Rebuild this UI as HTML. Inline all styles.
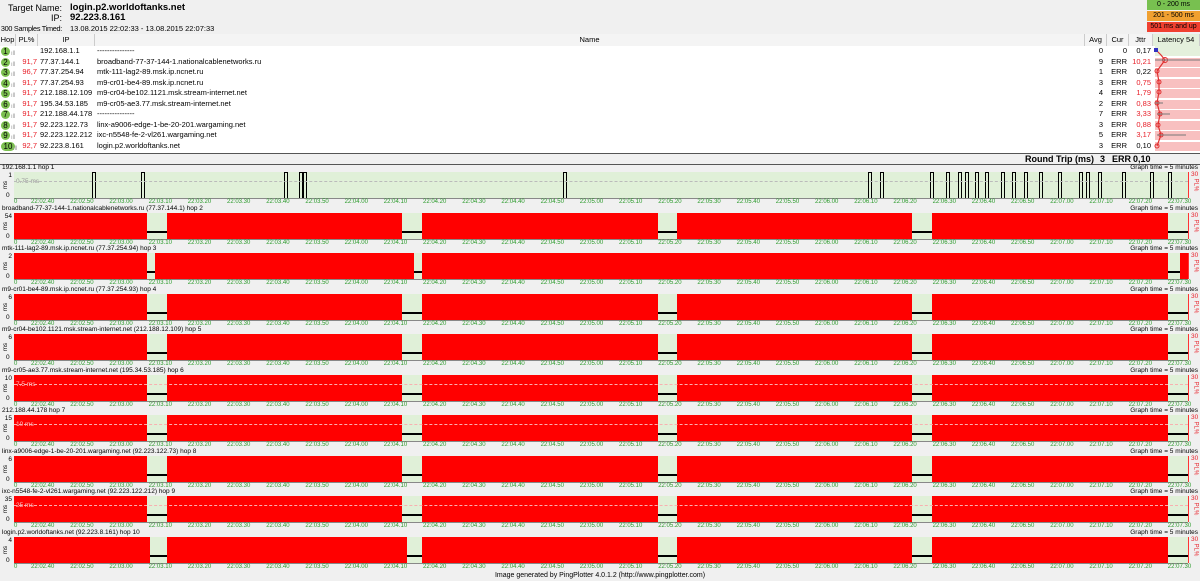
<!DOCTYPE html>
<html><head><meta charset="utf-8"><style>
*{margin:0;padding:0;box-sizing:border-box}
body{width:1200px;height:581px;background:#f0f0f0;font-family:"Liberation Sans",sans-serif;position:relative;overflow:hidden;color:#000}
.a{position:absolute;white-space:nowrap}
.col{position:absolute;top:34px;height:12px;border-right:1px solid #ccc;font-size:7.5px;line-height:12px;text-align:center;background:#f4f4f4}
.row{position:absolute;left:0;width:1153px;height:10.5px;font-size:7.5px;line-height:10.5px}
.red{color:#e8202a}
.t{font-size:6px;line-height:6px;color:#2a9a2a;position:absolute}
.ttl{font-size:6.5px;line-height:7px;position:absolute;left:2px}
.rl{position:absolute;left:0;width:62px;text-align:right;white-space:nowrap}
</style></head><body>
<div class="rl" style="top:3px;font-size:9px">Target Name:</div>
<div class="a" style="left:70px;top:2px;font-size:9.5px;font-weight:bold">login.p2.worldoftanks.net</div>
<div class="rl" style="top:13px;font-size:9px">IP:</div>
<div class="a" style="left:70px;top:12px;font-size:9.5px;font-weight:bold">92.223.8.161</div>
<div class="rl" style="top:24px;font-size:7.3px;letter-spacing:-0.3px">300 Samples Timed:</div>
<div class="a" style="left:70px;top:24px;font-size:7.5px">13.08.2015 22:02:33 - 13.08.2015 22:07:33</div>
<div class="a" style="left:1147px;top:0;width:53px;height:10px;background:#78c050;font-size:7px;text-align:center;line-height:10px">0 - 200 ms</div>
<div class="a" style="left:1147px;top:11px;width:53px;height:10px;background:#f0a030;font-size:7px;text-align:center;line-height:10px">201 - 500 ms</div>
<div class="a" style="left:1147px;top:22px;width:53px;height:10px;background:#f04030;font-size:7px;text-align:center;line-height:10px">501 ms and up</div>
<div class="a" style="left:0;top:46px;width:1200px;height:107px;background:#fff"></div>
<div class="col" style="left:0;width:16px">Hop</div>
<div class="col" style="left:16px;width:22px">PL%</div>
<div class="col" style="left:38px;width:57px">IP</div>
<div class="col" style="left:95px;width:990px">Name</div>
<div class="col" style="left:1085px;width:22px">Avg</div>
<div class="col" style="left:1107px;width:22px">Cur</div>
<div class="col" style="left:1129px;width:24px">Jttr</div>
<div class="col" style="left:1153px;width:47px;background:#e4f0dc">Latency 54</div>
<div class="a" style="left:1155px;top:46px;width:45px;height:10px;background:#e4f0dc"></div>
<div id="lat"></div>
<div id="rows"></div>
<svg class="a" style="left:1153px;top:46px" width="47" height="107">
<polyline points="3,4 8,9 12,14 4,25 6,36 6,46 4,57 7,68 5,79 8,89 4,100" fill="none" stroke="#e03030" stroke-width="1.2"/>
<g fill="none" stroke="#e03030" stroke-width="1"><circle cx="12" cy="14" r="2.5"/><circle cx="4" cy="25" r="2"/><circle cx="6" cy="36" r="2"/><circle cx="6" cy="46" r="2"/><circle cx="4" cy="57" r="2"/><circle cx="7" cy="68" r="2"/><circle cx="5" cy="79" r="2"/><circle cx="8" cy="89" r="2"/><circle cx="4" cy="100" r="2"/></g>
<rect x="1" y="2" width="4" height="4" fill="#3030c0"/>
<g stroke="#777"><line x1="2" y1="14" x2="47" y2="14"/><line x1="2" y1="57" x2="10" y2="57"/><line x1="4" y1="68" x2="17" y2="68"/><line x1="4" y1="89" x2="33" y2="89"/></g>
</svg>
<div class="a" style="left:0;top:153px;width:1200px;height:1px;background:#555"></div>
<div class="a" style="left:1025px;top:154px;font-size:9px;font-weight:bold">Round Trip (ms)</div>
<div class="a" style="left:1100px;top:154px;font-size:9px;font-weight:bold">3</div>
<div class="a" style="left:1112px;top:154px;font-size:9px;font-weight:bold">ERR</div>
<div class="a" style="left:1133px;top:154px;font-size:9px;font-weight:bold">0,10</div>
<div class="a" style="left:0;top:164px;width:1200px;height:1px;background:#555"></div>
<div id="g"></div>
<div class="a" style="left:0;top:572px;width:1200px;text-align:center;font-size:7px">Image generated by PingPlotter 4.0.1.2 (http://www.pingplotter.com)</div>
<script>
var rows=[["","192.168.1.1","---------------","0","0","0,17",0],["91,7","77.37.144.1","broadband-77-37-144-1.nationalcablenetworks.ru","9","ERR","10,21",1],["96,7","77.37.254.94","mtk-111-lag2-89.msk.ip.ncnet.ru","1","ERR","0,22",0],["91,7","77.37.254.93","m9-cr01-be4-89.msk.ip.ncnet.ru","3","ERR","0,75",1],["91,7","212.188.12.109","m9-cr04-be102.1121.msk.stream-internet.net","4","ERR","1,79",1],["91,7","195.34.53.185","m9-cr05-ae3.77.msk.stream-internet.net","2","ERR","0,83",1],["91,7","212.188.44.178","---------------","7","ERR","3,33",1],["91,7","92.223.122.73","linx-a9006-edge-1-be-20-201.wargaming.net","3","ERR","0,88",1],["91,7","92.223.122.212","ixc-n5548-fe-2-vl261.wargaming.net","5","ERR","3,17",1],["92,7","92.223.8.161","login.p2.worldoftanks.net","3","ERR","0,10",0]];
var h="",L="";
rows.forEach(function(r,i){var y=46+i*10.5;
L+='<div class="a" style="left:1155px;top:'+(y+1)+'px;width:45px;height:9px;background:'+(i==0?'#e4f0dc':'#f8c0c0')+'"></div>';
h+='<div class="row" style="top:'+y+'px"><span class="a" style="left:1px;top:1px;width:'+(i==9?14:9)+'px;height:9px;border-radius:5px;background:#7cc050;font-size:8px;line-height:9px;text-align:center">'+(i+1)+'</span>'+
'<span class="a" style="left:'+(i==9?13:11)+'px;top:3px;color:#999;font-size:6px">ıll</span>'+
'<span class="a red" style="left:18px;width:19px;text-align:right">'+r[0]+'</span><span class="a" style="left:40px">'+r[1]+'</span><span class="a" style="left:97px">'+r[2]+'</span>'+
'<span class="a" style="left:1085px;width:18px;text-align:right">'+r[3]+'</span><span class="a" style="left:1107px;width:20px;text-align:right">'+r[4]+'</span><span class="a'+(r[6]?' red':'')+'" style="left:1129px;width:22px;text-align:right">'+r[5]+'</span></div>';});
document.getElementById("rows").innerHTML=h;
document.getElementById("lat").innerHTML=L;
var names=["192.168.1.1 hop 1","broadband-77-37-144-1.nationalcablenetworks.ru (77.37.144.1) hop 2","mtk-111-lag2-89.msk.ip.ncnet.ru (77.37.254.94) hop 3","m9-cr01-be4-89.msk.ip.ncnet.ru (77.37.254.93) hop 4","m9-cr04-be102.1121.msk.stream-internet.net (212.188.12.109) hop 5","m9-cr05-ae3.77.msk.stream-internet.net (195.34.53.185) hop 6","212.188.44.178 hop 7","linx-a9006-edge-1-be-20-201.wargaming.net (92.223.122.73) hop 8","ixc-n5548-fe-2-vl261.wargaming.net (92.223.122.212) hop 9","login.p2.worldoftanks.net (92.223.8.161) hop 10"];
var tops=["1","54","2","6","6","10","15","6","35","4"];
var std=[[147,167],[402,422],[658,677],[912,932],[1168,1188]];
var gaps=[null,std,[[147,155],[414,422],[1168,1180]],std,std,std,std,std,std,[[150,167],[407,422],[658,677],[912,932],[1168,1188]]];
var labs=["0.75 ms","","","","","7.5 ms","10 ms","","25 ms",""];
var g="";
for(var i=0;i<10;i++){var T=164+i*40.5,P=T+8;
g+='<div class="ttl" style="top:'+T+'px">'+names[i]+'</div><div class="a" style="right:2px;top:'+T+'px;font-size:6.5px;line-height:7px">Graph time = 5 minutes</div>';
g+='<div class="a" style="left:14px;top:'+P+'px;width:1174px;height:26px;background:'+(i==0?'#e0f0d8':'#ff0000')+'"></div>';
if(gaps[i])gaps[i].forEach(function(q){g+='<div class="a" style="left:'+q[0]+'px;top:'+P+'px;width:'+(q[1]-q[0])+'px;height:26px;background:#e0f0d8"></div>';
g+='<div class="a" style="left:'+q[0]+'px;top:'+(P+18)+'px;width:'+(q[1]-q[0])+'px;height:2px;background:#000"></div>';});
if(i==0){[92,141,284,299,303,563,868,880,930,946,958,965,975,985,1001,1012,1024,1039,1058,1079,1086,1098,1122,1150,1168].forEach(function(x){g+='<div class="a" style="left:'+x+'px;top:'+P+'px;width:4px;height:26px;border:1px solid #000;border-bottom:none"></div>';});}
if(labs[i])g+='<div class="a" style="left:16px;top:'+(P+6)+'px;font-size:6.5px;color:'+(i==0?'#999':'#f8c8c8')+'">'+labs[i]+'</div><div class="a" style="left:14px;top:'+(P+9)+'px;width:1174px;border-top:1px dashed '+(i==0?'#bbb':'#f8b0b0')+'"></div>';
g+='<div class="a" style="left:0;top:'+P+'px;width:12px;text-align:right;font-size:6.5px">'+tops[i]+'</div><div class="a" style="left:6px;top:'+(P+20)+'px;font-size:6.5px">0</div><div class="a" style="left:2px;top:'+(P+10)+'px;font-size:6px;transform:rotate(-90deg)">ms</div>';
g+='<div class="a" style="left:14px;top:'+(P+26)+'px;width:1174px;height:1px;background:#888"></div><div class="a" style="left:1188px;top:'+P+'px;width:1px;height:26px;background:#f33"></div>';
g+='<div class="a red" style="left:1191px;top:'+(P-1)+'px;font-size:6.5px">30</div><div class="a red" style="left:1189px;top:'+(P+10)+'px;font-size:6px;transform:rotate(90deg)">PL%</div>';
g+='<div class="t" style="left:14px;top:'+(P+27)+'px">0</div>';
for(var k=0;k<30;k++){var lbl="22:0"+(2+Math.floor((40+k*10)/60))+"."+("0"+((40+k*10)%60)).slice(-2);
g+='<div class="t" style="left:'+(31+k*39.2)+'px;top:'+(P+27)+'px">'+lbl+'</div>';}
}
document.getElementById("g").innerHTML=g;
</script>
</body></html>
